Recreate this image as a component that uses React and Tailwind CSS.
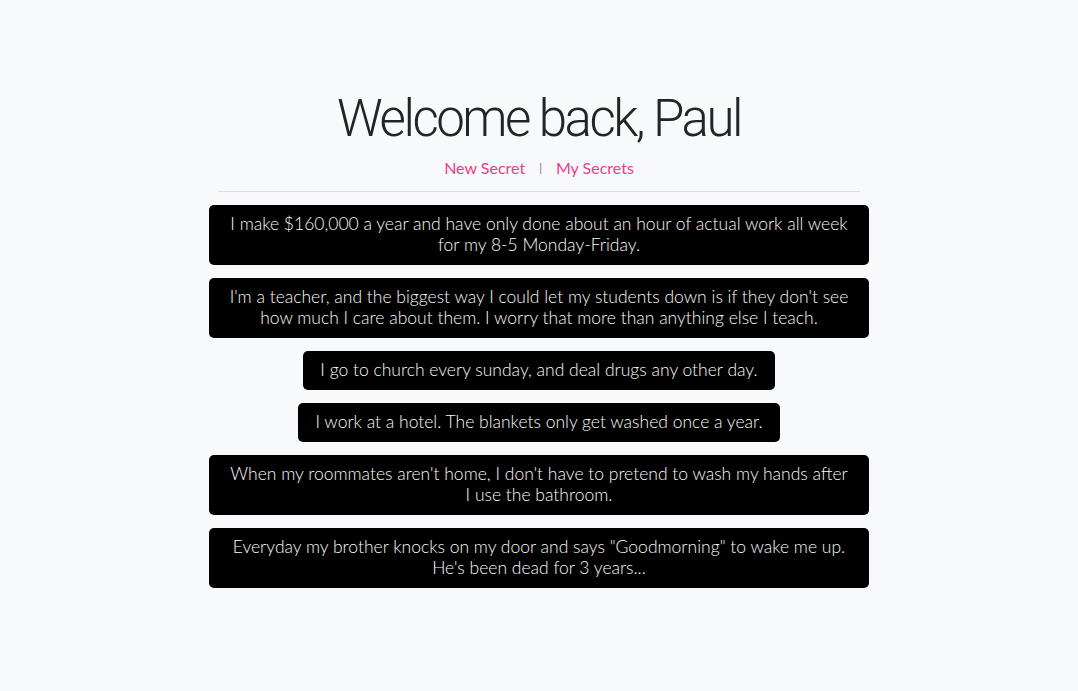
import React from "react";

const secrets = [
  { lines: ["I make $160,000 a year and have only done about an hour of actual work all week", "for my 8-5 Monday-Friday."], full: true },
  { lines: ["I'm a teacher, and the biggest way I could let my students down is if they don't see", "how much I care about them. I worry that more than anything else I teach."], full: true },
  { lines: ["I go to church every sunday, and deal drugs any other day."], full: false },
  { lines: ["I work at a hotel. The blankets only get washed once a year."], full: false },
  { lines: ["When my roommates aren't home, I don't have to pretend to wash my hands after", "I use the bathroom."], full: true },
  { lines: ["Everyday my brother knocks on my door and says \"Goodmorning\" to wake me up.", "He's been dead for 3 years..."], full: true },
];

export default function App() {
  return (
    <div className="min-h-[691px] bg-[#f8f9fa] text-[#212529]" style={{ fontFamily: "Lato, 'Open Sans', sans-serif" }}>
      <div className="flex flex-col items-center pt-[86px]">
        <h1 className="text-[51px] font-light leading-[65px] tracking-[-2.5px]" style={{ fontFamily: "Roboto, sans-serif" }}>Welcome back, Paul</h1>
        <div className="mt-[5px] flex items-center text-[16px] leading-[24px]">
          <a className="text-[#e83e8c]">New Secret</a>
          <span className="mx-[14px] text-[11px] text-[#6c757d]">|</span>
          <a className="text-[#e83e8c]">My Secrets</a>
        </div>
        <div className="mt-[11px] h-px w-[642px] bg-[#dcdde0]" />
        <div className="mt-[13px] flex w-[660px] flex-col items-center gap-[13px]">
          {secrets.map((s, i) => (
            <div
              key={i}
              className={`rounded-[5px] bg-black px-[17px] pt-[8px] pb-[10px] text-center text-[17.5px] font-light leading-[21px] text-[#f8f9fa] ${s.full ? "w-[660px]" : "w-fit"}`}
            >
              {s.lines.map((l, j) => (
                <div key={j} className="whitespace-nowrap">{l}</div>
              ))}
            </div>
          ))}
        </div>
      </div>
    </div>
  );
}
